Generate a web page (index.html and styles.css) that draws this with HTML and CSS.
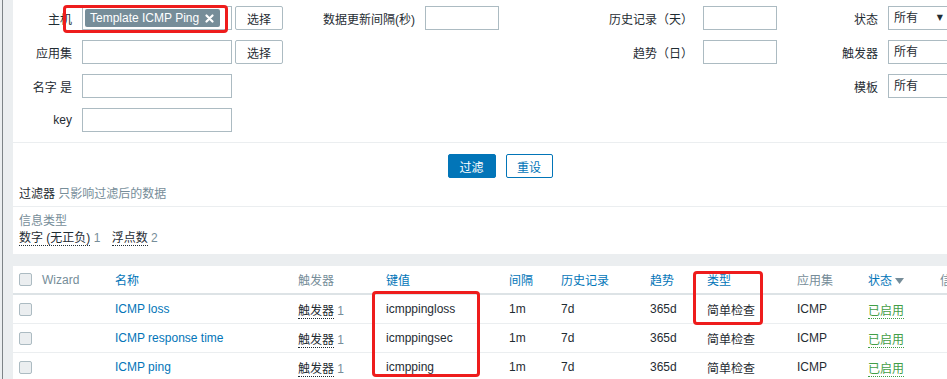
FILE: index.html
```html
<!DOCTYPE html>
<html lang="zh">
<head>
    <meta charset="UTF-8">
    <title>监控项</title>
    <link rel="stylesheet" href="styles.css">
</head>
<body>
    <div class="page">
        <div class="filter">
            <div class="filter-form">
                <label>主机</label>
                <div class="field-pick">
                    <div class="multiselect">
                        <span class="tag">Template ICMP Ping
                            <svg width="9" height="9" viewBox="0 0 9 9"><path d="M1.5 1.5 L7.5 7.5 M7.5 1.5 L1.5 7.5" stroke="#fff" stroke-width="2.2" stroke-linecap="round"/></svg>
                        </span>
                    </div>
                    <button class="btn-alt">选择</button>
                </div>
                <label>数据更新间隔(秒)</label>
                <input type="text">
                <label>历史记录（天）</label>
                <input type="text">
                <label>状态</label>
                <div class="select select-short">所有<span class="caret">▼</span></div>

                <label>应用集</label>
                <div class="field-pick">
                    <input type="text" class="input-wide">
                    <button class="btn-alt">选择</button>
                </div>
                <div></div>
                <div></div>
                <label>趋势（日）</label>
                <input type="text">
                <label>触发器</label>
                <div class="select">所有</div>

                <label>名字 是</label>
                <div><input type="text" class="input-wide"></div>
                <div></div>
                <div></div>
                <div></div>
                <div></div>
                <label>模板</label>
                <div class="select">所有</div>

                <label>key</label>
                <div><input type="text" class="input-wide"></div>
            </div>

            <div class="filter-buttons">
                <button class="btn-main">过滤</button>
                <button class="btn-reset">重设</button>
            </div>
            <div class="filter-note"><span class="dark">过滤器</span> 只影响过滤后的数据</div>

            <div class="subfilter">
                <div class="muted">信息类型</div>
                <div>
                    <span class="dotted">数字 (无正负)</span> <span class="muted">1</span>
                    <span class="dotted spaced">浮点数</span> <span class="muted">2</span>
                </div>
            </div>
        </div>

        <table class="list">
            <colgroup>
                <col style="width: 23px"><col style="width: 73px"><col style="width: 183px">
                <col style="width: 88px"><col style="width: 123px"><col style="width: 52px">
                <col style="width: 89px"><col style="width: 57px"><col style="width: 90px">
                <col style="width: 71px"><col style="width: 72px"><col>
            </colgroup>
            <thead>
                <tr>
                    <th><span class="checkbox"></span></th>
                    <th class="muted">Wizard</th>
                    <th class="link">名称</th>
                    <th class="muted">触发器</th>
                    <th class="link">键值</th>
                    <th class="link">间隔</th>
                    <th class="link">历史记录</th>
                    <th class="link">趋势</th>
                    <th class="link">类型</th>
                    <th class="muted">应用集</th>
                    <th class="link">状态 <svg width="9" height="6" viewBox="0 0 9 6"><path d="M0 0 H9 L4.5 6 Z" fill="#768d99"/></svg></th>
                    <th class="muted">信息</th>
                </tr>
            </thead>
            <tbody>
                <tr>
                    <td><span class="checkbox"></span></td>
                    <td></td>
                    <td class="link">ICMP loss</td>
                    <td><span class="dotted">触发器</span> <span class="muted">1</span></td>
                    <td>icmppingloss</td>
                    <td>1m</td>
                    <td>7d</td>
                    <td>365d</td>
                    <td>简单检查</td>
                    <td>ICMP</td>
                    <td><span class="status">已启用</span></td>
                    <td></td>
                </tr>
                <tr>
                    <td><span class="checkbox"></span></td>
                    <td></td>
                    <td class="link">ICMP response time</td>
                    <td><span class="dotted">触发器</span> <span class="muted">1</span></td>
                    <td>icmppingsec</td>
                    <td>1m</td>
                    <td>7d</td>
                    <td>365d</td>
                    <td>简单检查</td>
                    <td>ICMP</td>
                    <td><span class="status">已启用</span></td>
                    <td></td>
                </tr>
                <tr>
                    <td><span class="checkbox"></span></td>
                    <td></td>
                    <td class="link">ICMP ping</td>
                    <td><span class="dotted">触发器</span> <span class="muted">1</span></td>
                    <td>icmpping</td>
                    <td>1m</td>
                    <td>7d</td>
                    <td>365d</td>
                    <td>简单检查</td>
                    <td>ICMP</td>
                    <td><span class="status">已启用</span></td>
                    <td></td>
                </tr>
            </tbody>
        </table>
    </div>

    <!-- annotation boxes drawn on top of the screenshot -->
    <div class="mark mark-host"></div>
    <div class="mark mark-key"></div>
    <div class="mark mark-type"></div>
</body>
</html>
```

FILE: styles.css
```css
html {
    overflow: hidden;
}
body {
    margin: 0;
    position: relative;
    background-color: #ebeef0;
    font-family: "Liberation Sans", Arial, "Noto Sans CJK SC", sans-serif;
    font-size: 12px;
    color: #1f2c33;
    height: 379px;
}
.page {
    width: 974px;
    margin-left: 2px;
    padding-left: 10px;
    border-left: 1px solid #7d8387;
    min-height: 379px;
}
.filter {
    background-color: #fff;
    margin-bottom: 12px;
}
.filter-form {
    display: grid;
    grid-template-columns: 59px 201px 122px 74px 184px 74px 91px 100px;
    grid-auto-rows: 24px;
    column-gap: 10px;
    row-gap: 10px;
    padding: 6px 0 10px;
    border-bottom: 1px solid #ebeef0;
}
.filter-form label {
    text-align: right;
    align-self: center;
    white-space: nowrap;
}
input {
    box-sizing: border-box;
    width: 74px;
    height: 24px;
    border: 1px solid #acbbc2;
    padding: 0 5px;
    margin: 0;
    font: inherit;
}
.input-wide {
    width: 150px;
}
.field-pick {
    display: flex;
    gap: 3px;
}
.multiselect {
    box-sizing: border-box;
    width: 150px;
    height: 24px;
    border: 1px solid #acbbc2;
    padding: 2px 2px;
}
.tag {
    display: inline-flex;
    align-items: center;
    gap: 6px;
    height: 18px;
    padding: 0 6px 0 5px;
    background-color: #768d99;
    color: #fff;
    border-radius: 2px;
    line-height: 18px;
}
button {
    font: inherit;
    height: 24px;
    border-radius: 2px;
    cursor: pointer;
    margin: 0;
}
.btn-alt {
    width: 48px;
    background-color: #fff;
    border: 1px solid #acbbc2;
    color: #1f2c33;
}
.select {
    box-sizing: border-box;
    width: 100px;
    height: 24px;
    border: 1px solid #acbbc2;
    padding: 0 5px;
    line-height: 22px;
    display: flex;
    justify-content: space-between;
}
.select-short {
    width: 64px;
}
.caret {
    font-family: "DejaVu Sans", sans-serif;
    font-size: 8px;
    color: #1f2c33;
    padding-right: 3px;
}
.filter-buttons {
    display: flex;
    justify-content: center;
    gap: 10px;
    padding-top: 11px;
}
.btn-main {
    width: 48px;
    background-color: #0275b8;
    border: 1px solid #0275b8;
    color: #fff;
}
.btn-reset {
    width: 47px;
    background-color: #fff;
    border: 1px solid #0275b8;
    color: #0275b8;
}
.filter-note {
    color: #768d99;
    line-height: 16px;
    padding: 8px 6px 4px;
    border-bottom: 1px solid #ebeef0;
}
.dark {
    color: #1f2c33;
}
.subfilter {
    line-height: 17px;
    padding: 6px 6px 7px;
}
.muted {
    color: #768d99;
}
.dotted {
    border-bottom: 1px dotted #1f2c33;
}
.spaced {
    margin-left: 8px;
}
.list {
    width: 100%;
    table-layout: fixed;
    border-collapse: collapse;
    background-color: #fff;
}
.list th {
    height: 27px;
    padding: 0 6px;
    text-align: left;
    font-weight: normal;
    white-space: nowrap;
    overflow: hidden;
    border-bottom: 2px solid #dde3e6;
}
.list td {
    height: 28px;
    padding: 0 6px;
    white-space: nowrap;
    border-bottom: 1px solid #ebeef0;
}
.list th.link,
.list td.link {
    color: #0275b8;
}
.list th.muted {
    color: #768d99;
}
.list th svg {
    vertical-align: 1px;
}
.checkbox {
    display: block;
    box-sizing: border-box;
    width: 13px;
    height: 13px;
    border: 1px solid #acbbc2;
    border-radius: 2px;
    background-color: #ebeef0;
}
.status {
    color: #429e47;
    border-bottom: 1px dotted #429e47;
}
.mark {
    position: absolute;
    box-sizing: border-box;
    border: 3px solid #ee1c1c;
    border-radius: 4px;
}
.mark-host {
    left: 63px;
    top: 5px;
    width: 165px;
    height: 28px;
}
.mark-key {
    left: 372px;
    top: 291px;
    width: 108px;
    height: 86px;
}
.mark-type {
    left: 693px;
    top: 271px;
    width: 70px;
    height: 54px;
}
```
